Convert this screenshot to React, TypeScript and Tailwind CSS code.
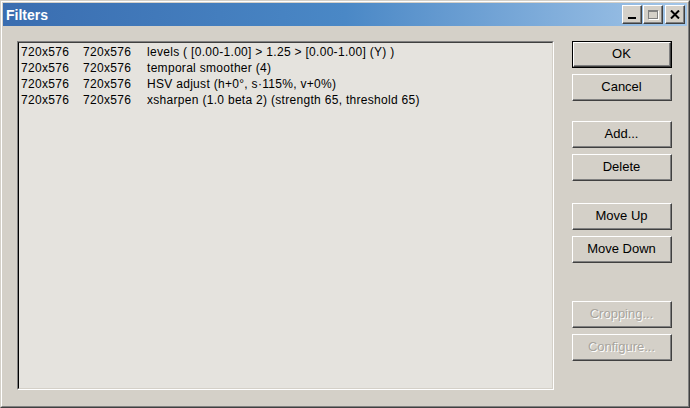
import React from 'react';

const rows = [
  ['720x576', '720x576', 'levels ( [0.00-1.00] > 1.25 > [0.00-1.00] (Y) )'],
  ['720x576', '720x576', 'temporal smoother (4)'],
  ['720x576', '720x576', 'HSV adjust (h+0°, s·115%, v+0%)'],
  ['720x576', '720x576', 'xsharpen (1.0 beta 2) (strength 65, threshold 65)'],
];

function Btn({ label, def, disabled }: { label: string; def?: boolean; disabled?: boolean }) {
  const inner = (
    <div className="w-full h-full border-t border-l border-b border-r border-t-white border-l-white border-b-[#404040] border-r-[#404040]">
      <div className="w-full h-full flex items-center justify-center border-b border-r border-b-[#808080] border-r-[#808080] text-[13px]">
        {disabled ? (
          <span className="text-[#a8a59e] [text-shadow:1px_1px_0_#ffffff]">{label}</span>
        ) : (
          <span className="text-black">{label}</span>
        )}
      </div>
    </div>
  );
  return (
    <div className={def ? 'w-[100px] h-[27px] border border-black' : 'w-[100px] h-[27px]'}>
      {inner}
    </div>
  );
}

function CaptionBtn({ children }: { children: React.ReactNode }) {
  return (
    <div className="w-[20px] h-[19px] bg-[#d4d0c8] border-t border-l border-b border-r border-t-white border-l-white border-b-[#404040] border-r-[#404040]">
      <div className="w-full h-full flex items-center justify-center border-b border-r border-b-[#808080] border-r-[#808080]">
        {children}
      </div>
    </div>
  );
}

export default function App() {
  return (
    <div className="w-[690px] h-[408px] bg-[#d4d0c8] font-['Liberation_Sans',Arial,sans-serif] text-[12px] border-t border-l border-b border-r border-t-[#d4d0c8] border-l-[#d4d0c8] border-b-[#404040] border-r-[#404040] overflow-hidden">
      <div className="w-full h-full flex flex-col border-t border-l border-b border-r border-t-white border-l-white border-b-[#808080] border-r-[#808080] px-px pt-px">
        {/* title bar */}
        <div className="h-[23px] shrink-0 flex items-center bg-gradient-to-r from-[#3a6db0] via-[#4a88c6] to-[#a3c6e8] pl-[3px] pr-[2px]">
          <span className="text-white font-bold text-[14px] flex-1 pt-px">Filters</span>
          <div className="flex items-center">
            <CaptionBtn>
              <div className="w-[8px] h-[2px] bg-black mt-[8px]" />
            </CaptionBtn>
            <div className="ml-px">
              <CaptionBtn>
                <div className="w-[10px] h-[9px] border border-[#808080] border-t-2 [box-shadow:1px_1px_0_#ffffff]" />
              </CaptionBtn>
            </div>
            <div className="ml-[2px]">
              <CaptionBtn>
                <svg width="10" height="9" viewBox="0 0 10 9">
                  <path d="M1 0.5 L9 8.5 M9 0.5 L1 8.5" stroke="black" strokeWidth="2" />
                </svg>
              </CaptionBtn>
            </div>
          </div>
        </div>

        {/* body */}
        <div className="flex-1 flex pl-[14px] pt-[15px] pb-[14px] pr-[15px] gap-[18px]">
          <div className="w-[538px] h-[349px] border-t border-l border-b border-r border-t-[#808080] border-l-[#808080] border-b-white border-r-white">
            <div className="w-full h-full bg-[#e5e3de] border-t border-l border-b border-r border-t-[#404040] border-l-black border-b-[#d4d0c8] border-r-[#d4d0c8] pl-[2px] pt-px text-black tracking-[0.3px]">
              {rows.map((r, i) => (
                <div key={i} className="flex h-[16px] items-center whitespace-nowrap">
                  <span className="w-[62px]">{r[0]}</span>
                  <span className="w-[64px]">{r[1]}</span>
                  <span>{r[2]}</span>
                </div>
              ))}
            </div>
          </div>

          <div className="flex flex-col">
            <Btn label="OK" def />
            <div className="mt-[6px]"><Btn label="Cancel" /></div>
            <div className="mt-[20px]"><Btn label="Add..." /></div>
            <div className="mt-[6px]"><Btn label="Delete" /></div>
            <div className="mt-[22px]"><Btn label="Move Up" /></div>
            <div className="mt-[6px]"><Btn label="Move Down" /></div>
            <div className="mt-[38px]"><Btn label="Cropping..." disabled /></div>
            <div className="mt-[6px]"><Btn label="Configure..." disabled /></div>
          </div>
        </div>
      </div>
    </div>
  );
}
